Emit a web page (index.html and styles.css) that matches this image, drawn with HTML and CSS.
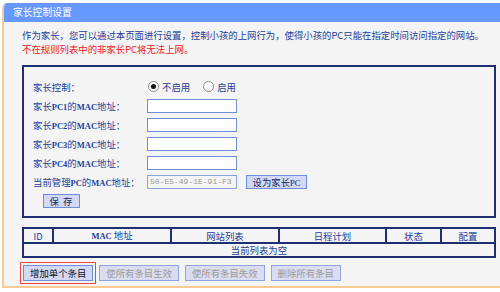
FILE: index.html
```html
<!DOCTYPE html>
<html lang="zh">
<head>
<meta charset="utf-8">
<link rel="stylesheet" href="styles.css">
</head>
<body>
<div class="panel">
  <div class="header">家长控制设置</div>
  <div class="content">
    <p class="intro">作为家长，您可以通过本页面进行设置，控制小孩的上网行为，使得小孩的PC只能在指定时间访问指定的网站。</p>
    <p class="warn">不在规则列表中的非家长PC将无法上网。</p>
    <div class="box">
      <div class="row">
        <span class="label">家长控制：</span>
        <span class="value radios">
          <span class="radio checked"></span><span class="rtext">不启用</span>
          <span class="radio second"></span><span class="rtext">启用</span>
        </span>
      </div>
      <div class="row"><span class="label">家长<span class="lat">PC1</span>的<span class="lat">MAC</span>地址：</span><span class="value"><span class="input"></span></span></div>
      <div class="row"><span class="label">家长<span class="lat">PC2</span>的<span class="lat">MAC</span>地址：</span><span class="value"><span class="input"></span></span></div>
      <div class="row"><span class="label">家长<span class="lat">PC3</span>的<span class="lat">MAC</span>地址：</span><span class="value"><span class="input"></span></span></div>
      <div class="row"><span class="label">家长<span class="lat">PC4</span>的<span class="lat">MAC</span>地址：</span><span class="value"><span class="input"></span></span></div>
      <div class="row"><span class="label">当前管理<span class="lat">PC</span>的<span class="lat">MAC</span>地址：</span><span class="value"><span class="input disabled">50-E5-49-1E-91-F3</span><span class="btn setpc">设为家长<span class="lat">PC</span></span></span></div>
      <div class="row save-row"><span class="btn save">保 存</span></div>
    </div>
    <table class="list">
      <tr class="head">
        <td class="c-id">ID</td>
        <td class="c-mac"><span class="lat">MAC</span> 地址</td>
        <td class="c-site">网站列表</td>
        <td class="c-plan">日程计划</td>
        <td class="c-state">状态</td>
        <td class="c-conf">配置</td>
      </tr>
      <tr class="empty"><td colspan="6">当前列表为空</td></tr>
    </table>
    <div class="actions">
      <span class="btn act add">增加单个条目</span>
      <span class="btn act off">使所有条目生效</span>
      <span class="btn act off">使所有条目失效</span>
      <span class="btn act off">删除所有条目</span>
    </div>
  </div>
</div>
</body>
</html>
```

FILE: styles.css
```css
html, body {
  margin: 0;
  padding: 0;
  background: #ffffff;
}
body {
  font-family: "Noto Sans CJK SC", "Noto Sans", sans-serif;
  font-size: 9.4px;
  color: #22409a;
}
.panel {
  margin: 3px 0 0 2px;
  height: 283px;
  background: #f4f4f4;
  border-left: 2px solid #fbc992;
  border-bottom: 2px solid #fbc992;
  border-top-left-radius: 5px;
  overflow: hidden;
}
.header {
  height: 19px;
  line-height: 19px;
  background: #6699ff;
  color: #ffffff;
  font-size: 9.8px;
  padding-left: 9px;
}
.content {
  padding: 6px 4px 0 18px;
}
.intro, .warn {
  margin: 0;
  height: 14px;
  line-height: 14px;
  white-space: nowrap;
}
.warn {
  color: #f01818;
}
.box {
  margin-top: 9px;
  border: 2px solid #1d2f72;
  padding: 10px 0 9px 9px;
  height: 130px;
}
.row {
  display: flex;
  align-items: center;
  height: 19px;
}
.label {
  width: 114px;
  white-space: nowrap;
}
.lat {
  font-family: "Liberation Serif", serif;
  font-size: 8.5px;
  font-weight: bold;
}
.value {
  display: flex;
  align-items: center;
}
.radios {
  margin-left: 1px;
}
.radio {
  width: 9px;
  height: 9px;
  border: 1px solid #8a8a8a;
  border-radius: 50%;
  background: #ffffff;
  position: relative;
  margin-right: 3px;
}
.radio.checked::after {
  content: "";
  position: absolute;
  left: 2px;
  top: 2px;
  width: 5px;
  height: 5px;
  border-radius: 50%;
  background: #111;
}
.radio.second {
  margin-left: 13px;
}
.input {
  width: 88px;
  height: 12px;
  border: 1px solid #6f8ed4;
  background: #ffffff;
  display: block;
}
.input.disabled {
  background: #f4f4f4;
  color: #9a9a9a;
  font-family: "Liberation Mono", monospace;
  font-size: 8px;
  line-height: 12px;
  padding-left: 2px;
  width: 86px;
  border-color: #8aa2d8;
}
.btn {
  display: inline-block;
  background: #d3d8f5;
  border: 1px solid #6d8cdb;
  color: #1b2a55;
  text-align: center;
  white-space: nowrap;
}
.setpc {
  margin-left: 9px;
  width: 59px;
  height: 12px;
  line-height: 12px;
}
.setpc .lat {
  font-weight: normal;
}
.save-row {
  padding-left: 10px;
}
.save {
  width: 35px;
  height: 12px;
  line-height: 12px;
  letter-spacing: 1px;
}
.list {
  margin-top: 9px;
  width: 474px;
  border-collapse: collapse;
  border: 2px solid #1d2f72;
}
.list td {
  border: 2px solid #1d2f72;
  height: 12px;
  line-height: 12px;
  padding: 0;
  text-align: center;
}
.head td {
  font-size: 9.4px;
}
.c-id { width: 28px; }
.c-mac { width: 116px; }
.c-site { width: 106px; }
.c-plan { width: 105px; }
.c-state { width: 53px; }
.c-conf { width: 52px; }
.actions {
  margin-top: 7px;
  display: flex;
  gap: 6px;
  padding-left: 1px;
}
.act {
  height: 14px;
  line-height: 14px;
  padding: 0 6px;
}
.add {
  color: #111;
  outline: 1px solid #ee4444;
  outline-offset: 2px;
}
.off {
  color: #9a9a9a;
  background: #dadcf0;
  border-color: #90a4df;
}
```
